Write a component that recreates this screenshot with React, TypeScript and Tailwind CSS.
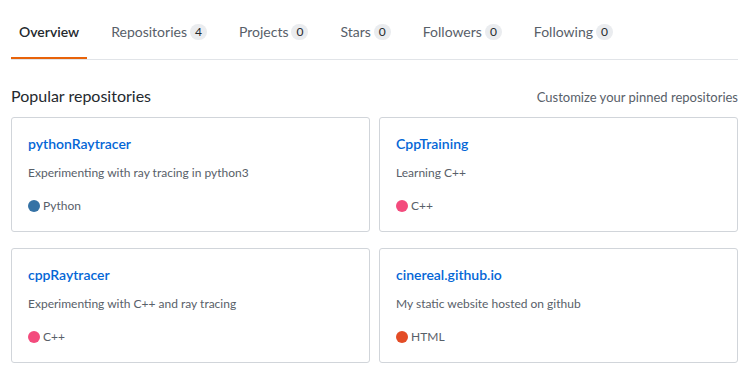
import React from "react";

type Tab = { label: string; count?: number; active?: boolean };

const tabs: Tab[] = [
  { label: "Overview", active: true },
  { label: "Repositories", count: 4 },
  { label: "Projects", count: 0 },
  { label: "Stars", count: 0 },
  { label: "Followers", count: 0 },
  { label: "Following", count: 0 },
];

type Repo = { name: string; desc: string; lang: string; dot: string };

const repos: Repo[] = [
  { name: "pythonRaytracer", desc: "Experimenting with ray tracing in python3", lang: "Python", dot: "bg-[#3572A5]" },
  { name: "CppTraining", desc: "Learning C++", lang: "C++", dot: "bg-[#f34b7d]" },
  { name: "cppRaytracer", desc: "Experimenting with C++ and ray tracing", lang: "C++", dot: "bg-[#f34b7d]" },
  { name: "cinereal.github.io", desc: "My static website hosted on github", lang: "HTML", dot: "bg-[#e34c26]" },
];

export default function App() {
  return (
    <div className="min-h-[377px] bg-white pl-[11px] pr-[10px] font-['Lato',sans-serif] text-[#24292e]">
      <nav className="flex h-[60px] gap-4 border-b border-[#e1e4e8]">
        {tabs.map((t) => (
          <div
            key={t.label}
            className={
              t.active
                ? "flex h-[59px] items-center gap-[3px] border-b-2 border-[#e8630a] px-2 pt-[7px] text-[14px] font-semibold text-[#24292e]"
                : "flex h-[59px] items-center gap-[3px] border-b-2 border-transparent px-2 pt-[7px] text-[14px] text-[#586069]"
            }
          >
            <span className="leading-5">{t.label}</span>
            {t.count !== undefined && (
              <span className="rounded-full bg-[#eaecef] px-[5px] py-[2px] text-[12px] leading-none text-[#24292e]">
                {t.count}
              </span>
            )}
          </div>
        ))}
      </nav>

      <div className="mt-[24px] mb-[8px] flex items-baseline justify-between">
        <h2 className="text-[16px] leading-6 font-normal text-[#24292e]">Popular repositories</h2>
        <span className="text-[13px] leading-6 text-[#586069]">Customize your pinned repositories</span>
      </div>

      <div className="grid grid-cols-2 gap-x-[9px] gap-y-[16px]">
        {repos.map((r) => (
          <div key={r.name} className="flex h-[115px] flex-col rounded-[3px] border border-[#d1d5da] p-4">
            <div className="text-[14px] leading-5 font-semibold text-[#0366d6]">{r.name}</div>
            <p className="mt-[10px] text-[12px] leading-[18px] text-[#586069]">{r.desc}</p>
            <div className="mt-[15px] flex items-center gap-[3px] text-[12px] leading-[18px] text-[#586069]">
              <span className={`inline-block h-3 w-3 rounded-full ${r.dot}`} />
              <span>{r.lang}</span>
            </div>
          </div>
        ))}
      </div>
    </div>
  );
}
